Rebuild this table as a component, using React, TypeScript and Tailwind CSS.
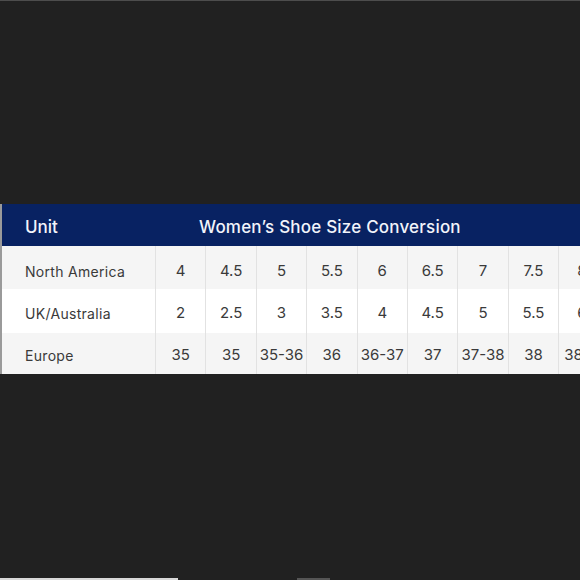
const rows: { label: string; values: string[]; h: string; bg: string; pt: string }[] = [
  {
    label: "North America",
    values: ["4", "4.5", "5", "5.5", "6", "6.5", "7", "7.5", "8"],
    h: "h-[43px]",
    bg: "bg-[#f5f5f5]",
    pt: "pt-[8px]",
  },
  {
    label: "UK/Australia",
    values: ["2", "2.5", "3", "3.5", "4", "4.5", "5", "5.5", "6"],
    h: "h-[44px]",
    bg: "bg-white",
    pt: "pt-[4px]",
  },
  {
    label: "Europe",
    values: ["35", "35", "35-36", "36", "36-37", "37", "37-38", "38", "38-39"],
    h: "h-[41px]",
    bg: "bg-[#f5f5f5]",
    pt: "pt-[4px]",
  },
];

export default function App() {
  return (
    <div className="h-[580px] w-[580px] overflow-hidden bg-[#212121] border-t border-[#4d4d4d] font-['Inter',sans-serif] relative">
      <div className="mt-[203px] w-[620px] border-l-2 border-[#9a9a9a]">
        {/* header */}
        <div className="flex h-[42px] items-center bg-[#082262] pt-[5px] text-[17px] font-medium text-[#f2f4fa]">
          <div className="w-[153px] pl-[23px]">Unit</div>
          <div className="ml-[44px] tracking-[0.2px]">Women’s Shoe Size Conversion</div>
        </div>

        {rows.map((r) => (
          <div key={r.label} className={`grid grid-cols-[153px_repeat(9,50.4px)] ${r.h} ${r.bg} text-[#3a3a3a]`}>
            <div className={`flex items-center pl-[23px] text-[14px] tracking-[0.3px] ${r.pt}`}>{r.label}</div>
            {r.values.map((v, i) => (
              <div
                key={i}
                className={`flex items-center border-l border-[#e2e2e2] text-[15px] ${r.pt} ${
                  i === 8 ? "justify-start pl-[18px]" : "justify-center"
                }`}
              >
                {i === 8 && v.length > 2 ? <span className="-ml-[13px]">{v}</span> : v}
              </div>
            ))}
          </div>
        ))}
      </div>
      <div className="absolute bottom-0 left-0 h-[2px] w-[178px] bg-[#d8d8d8]" />
      <div className="absolute bottom-0 left-[297px] h-[2px] w-[33px] bg-[#555]" />
    </div>
  );
}
